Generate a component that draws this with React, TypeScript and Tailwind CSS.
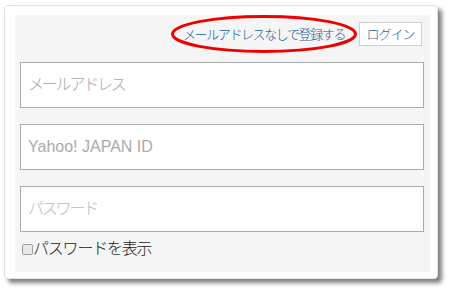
import React from 'react';

const FONT = "font-['Liberation_Sans','Noto_Sans_CJK_JP',sans-serif]";

export default function App() {
  return (
    <div className={`relative w-[451px] h-[294px] bg-white ${FONT}`}>
      <div className="absolute left-[4px] top-[5px] w-[434px] h-[274px] rounded-[4px] border border-[#e2e2e2] bg-white pl-[10px] pt-[9px] pr-[7px] pb-[6px] shadow-[4px_4px_4px_rgba(0,0,0,0.5)]">
        <div className="h-full bg-[#f5f5f5] pl-[5px] pr-[7px] pt-[7px]">
          {/* Top links */}
          <div className="flex items-center justify-end h-[24px]">
            <a className="text-[13px] font-light tracking-[-1.4px] text-[#1f5c9c] mr-[14px] leading-none">メールアドレスなしで登録する</a>
            <button className="h-[24px] w-[63px] mr-[1px] border border-[#cfcfcf] bg-white text-[13px] font-light tracking-[-1px] text-[#1f5c9c] leading-none">ログイン</button>
          </div>

          {/* Inputs */}
          <div className="mt-[16px] flex flex-col gap-[16px]">
            <input
              placeholder="メールアドレス"
              className="h-[46px] w-[404px] border border-[#ababab] bg-white px-[7px] text-[16px] font-light tracking-[-2.2px] outline-none placeholder:text-[#aaaaaa]"
            />
            <input
              placeholder="Yahoo! JAPAN ID"
              className="h-[46px] w-[404px] border border-[#ababab] bg-white px-[7px] text-[16px] outline-none placeholder:text-[#aaaaaa]"
            />
            <input
              placeholder="パスワード"
              className="h-[46px] w-[404px] border border-[#ababab] bg-white px-[7px] text-[16px] font-light tracking-[-2.2px] outline-none placeholder:text-[#bbbbbb]"
            />
          </div>

          {/* Show password */}
          <label className="mt-[5px] flex items-center h-[24px]">
            <span className="ml-[2px] h-[11px] w-[11px] rounded-[2px] border border-[#a0a0a0] bg-[#e8e8e8]" />
            <span className="text-[16px] font-light tracking-[-1.2px] text-[#222] leading-none">パスワードを表示</span>
          </label>
        </div>
      </div>

      {/* Red annotation ellipse */}
      <svg className="absolute left-[170px] top-[14px]" width="188" height="40" viewBox="0 0 188 40">
        <ellipse cx="94" cy="20" rx="91.5" ry="17.5" fill="none" stroke="#ee0000" strokeWidth="3" />
      </svg>
    </div>
  );
}
